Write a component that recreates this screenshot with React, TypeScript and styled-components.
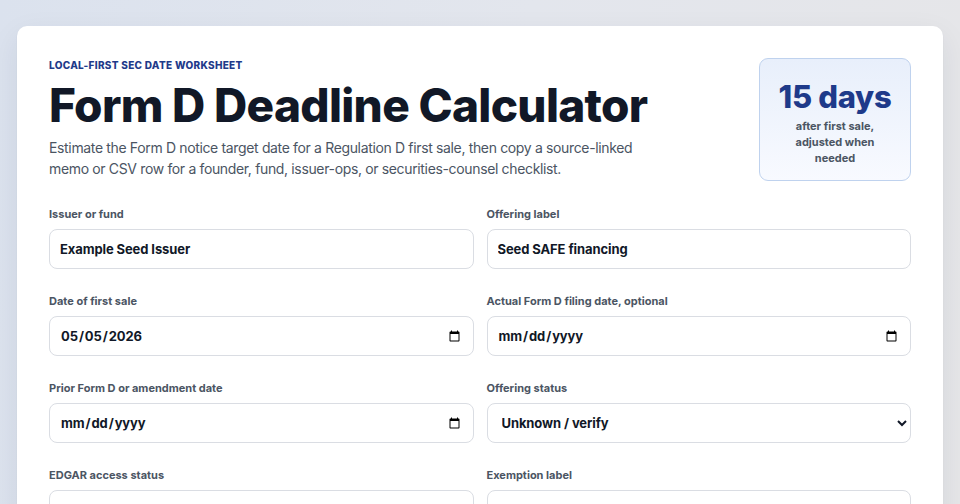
import React from "react";
import styled, { createGlobalStyle } from "styled-components";

const Global = createGlobalStyle`
  html, body { margin: 0; padding: 0; }
  body {
    font-family: Inter, "Noto Sans", "Liberation Sans", sans-serif;
    background: linear-gradient(100deg, #dbe2ee 0%, #e3e6ed 50%, #e6e6e8 100%);
    min-height: 100vh;
    color: #111827;
  }
`;

const Page = styled.main`
  padding: 26px 17px 40px;
`;

const Card = styled.section`
  background: #ffffff;
  border-radius: 10px;
  box-shadow: 0 10px 30px rgba(30, 41, 59, 0.08), 0 1px 2px rgba(30, 41, 59, 0.06);
  padding: 32px 32px 40px;
`;

const Header = styled.header`
  display: flex;
  justify-content: space-between;
  align-items: stretch;
  gap: 24px;
`;

const Intro = styled.div`
  display: flex;
  flex-direction: column;
`;

const Eyebrow = styled.div`
  font-size: 10px;
  line-height: 14px;
  font-weight: 800;
  letter-spacing: 0.03em;
  text-transform: uppercase;
  color: #1e3a8a;
`;

const Title = styled.h1`
  margin: 8px 0 0;
  font-size: 46px;
  line-height: 50px;
  font-weight: 800;
  letter-spacing: -0.015em;
  color: #111827;
`;

const Lead = styled.p`
  margin: 7px 0 0;
  max-width: 590px;
  font-size: 14px;
  line-height: 21px;
  letter-spacing: -0.35px;
  color: #4b5563;
`;

const Summary = styled.aside`
  flex: 0 0 auto;
  width: 152px;
  box-sizing: border-box;
  border: 1px solid #bfd2ee;
  border-radius: 9px;
  background: linear-gradient(180deg, #e8effb 0%, #f8faff 100%);
  display: flex;
  flex-direction: column;
  align-items: center;
  justify-content: center;
  text-align: center;
  padding: 20px 12px 14px;
`;

const Big = styled.div`
  font-size: 31px;
  line-height: 36px;
  font-weight: 800;
  color: #1e3a8a;
  letter-spacing: -0.01em;
  white-space: nowrap;
`;

const Small = styled.div`
  margin-top: 3px;
  max-width: 100px;
  font-size: 11px;
  line-height: 16px;
  font-weight: 700;
  color: #4b5563;
`;

const Form = styled.form`
  margin-top: 26px;
  display: grid;
  grid-template-columns: 1fr 1fr;
  column-gap: 13px;
  row-gap: 25px;
`;

const Field = styled.label`
  display: flex;
  flex-direction: column;
  gap: 8px;
`;

const LabelText = styled.span`
  font-size: 11px;
  line-height: 14px;
  font-weight: 700;
  color: #4b5563;
`;

const controlStyles = `
  box-sizing: border-box;
  width: 100%;
  height: 40px;
  border: 1px solid #dadde3;
  border-radius: 8px;
  background: #ffffff;
  font-family: Inter, "Noto Sans", "Liberation Sans", sans-serif;
  font-size: 13px;
  font-weight: 700;
  letter-spacing: -0.1px;
  color: #111827;
  padding: 0 10px;
  outline: none;
`;

const Input = styled.input`
  ${controlStyles}
`;

const Select = styled.select`
  ${controlStyles}
  padding: 0 6px 0 10px;
`;

type FieldDef = {
  label: string;
  kind: "text" | "date" | "select";
  value?: string;
  options?: string[];
};

const fields: FieldDef[] = [
  { label: "Issuer or fund", kind: "text", value: "Example Seed Issuer" },
  { label: "Offering label", kind: "text", value: "Seed SAFE financing" },
  { label: "Date of first sale", kind: "date", value: "2026-05-05" },
  { label: "Actual Form D filing date, optional", kind: "date", value: "" },
  { label: "Prior Form D or amendment date", kind: "date", value: "" },
  { label: "Offering status", kind: "select", options: ["Unknown / verify", "Ongoing", "Closed"] },
  { label: "EDGAR access status", kind: "select", options: ["Unknown / verify", "Have codes", "Need Form ID"] },
  { label: "Exemption label", kind: "text", value: "Rule 506(b)" },
];

export default function App() {
  return (
    <>
      <Global />
      <Page>
        <Card>
          <Header>
            <Intro>
              <Eyebrow>Local-first SEC date worksheet</Eyebrow>
              <Title>Form D Deadline Calculator</Title>
              <Lead>
                Estimate the Form D notice target date for a Regulation D first sale, then copy a source-linked
                memo or CSV row for a founder, fund, issuer-ops, or securities-counsel checklist.
              </Lead>
            </Intro>
            <Summary>
              <Big>15 days</Big>
              <Small>after first sale, adjusted when needed</Small>
            </Summary>
          </Header>
          <Form onSubmit={(e) => e.preventDefault()}>
            {fields.map((f) => (
              <Field key={f.label}>
                <LabelText>{f.label}</LabelText>
                {f.kind === "select" ? (
                  <Select defaultValue={f.options![0]}>
                    {f.options!.map((o) => (
                      <option key={o}>{o}</option>
                    ))}
                  </Select>
                ) : (
                  <Input type={f.kind} defaultValue={f.value} />
                )}
              </Field>
            ))}
          </Form>
        </Card>
      </Page>
    </>
  );
}
